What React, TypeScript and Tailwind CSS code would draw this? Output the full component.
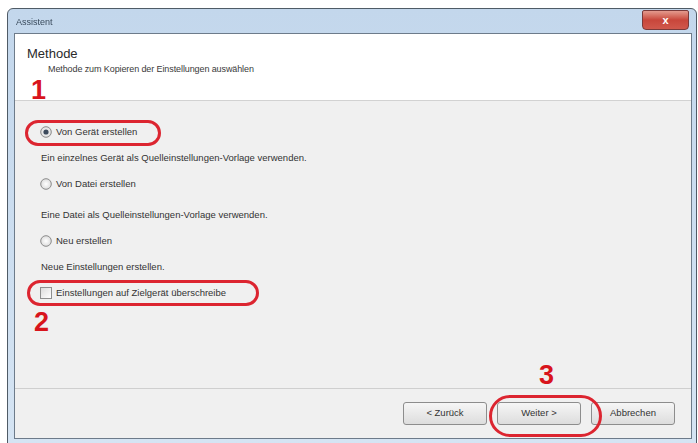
import React from 'react';

const font = { fontFamily: '"Liberation Sans", Arial, sans-serif' };

function Radio({ checked }: { checked?: boolean }) {
  return (
    <svg width="12" height="12" viewBox="0 0 12 12" className="shrink-0">
      <defs>
        <radialGradient id="rg" cx="50%" cy="50%" r="60%">
          <stop offset="0%" stopColor="#ffffff" />
          <stop offset="100%" stopColor="#d6d6d6" />
        </radialGradient>
      </defs>
      <circle cx="6" cy="6" r="5.3" fill="url(#rg)" stroke="#8c8c8c" strokeWidth="1" />
      {checked && <circle cx="6" cy="6" r="2.6" fill="#3c4a5c" />}
    </svg>
  );
}

function Checkbox() {
  return (
    <span className="shrink-0 w-[12px] h-[12px] border border-[#8e8f8f] bg-gradient-to-br from-[#dcdcdc] to-[#ffffff]" />
  );
}

const options = [
  { label: 'Von Gerät erstellen', desc: 'Ein einzelnes Gerät als Quelleinstellungen-Vorlage verwenden.', checked: true },
  { label: 'Von Datei erstellen', desc: 'Eine Datei  als Quelleinstellungen-Vorlage verwenden.', checked: false },
  { label: 'Neu erstellen', desc: 'Neue Einstellungen erstellen.', checked: false },
];

export default function App() {
  return (
    <div className="relative w-[698px] h-[443px] bg-white overflow-hidden" style={font}>
      <div className="ml-[7px] mt-[8px] w-[690px] h-[436px] border border-[#4f5b66] rounded-t-[6px] bg-gradient-to-b from-[#c3d7ec] to-[#d5e4f3] flex flex-col">
        {/* title bar */}
        <div className="h-[24px] flex items-start justify-between pl-[8px] pr-[7px]">
          <span className="mt-[7px] text-[9px] text-[#3a4b5c] blur-[0.7px]">Assistent</span>
          <div className="mt-[1px] w-[47px] h-[20px] rounded-b-[4px] rounded-t-[2px] border border-[#7a3a3a] bg-gradient-to-b from-[#e39a8e] via-[#c8463b] to-[#d0584c] flex items-center justify-center text-white text-[11px] font-bold">
            x
          </div>
        </div>

        {/* client */}
        <div className="ml-[6px] mr-[4px] mb-[4px] flex-1 border border-[#6d7b8a] bg-[#f0f0f0] flex flex-col">
          <div className="h-[67px] bg-white border-b border-[#d2d2d2] pl-[12px] pt-[12px]">
            <div className="text-[13px] leading-[16px] text-[#2a2a2a]">Methode</div>
            <div className="pl-[21px] mt-[1px] text-[9px] leading-[12px] text-[#3a3a3a] tracking-[-0.1px]">
              Methode zum Kopieren der Einstellungen auswählen
            </div>
          </div>

          <div className="flex-1 pl-[25px] pt-[18px] text-[9.5px] text-[#333]">
            {options.map((o, i) => (
              <div key={o.label}>
                <div className="h-[26px] flex items-center gap-[4px]">
                  <Radio checked={o.checked} />
                  <span>{o.label}</span>
                </div>
                <div className={`h-[26px] flex items-center pl-[1px] ${i === 1 ? 'mt-[5px]' : ''}`}>{o.desc}</div>
              </div>
            ))}
            <div className="h-[26px] flex items-center gap-[4px]">
              <Checkbox />
              <span>Einstellungen auf Zielgerät überschreibe</span>
            </div>
          </div>

          <div className="h-[50px] border-t border-[#cfcfcf] flex items-center justify-end gap-[10px] pr-[16px] pb-[1px]">
            {['< Zurück', 'Weiter >', 'Abbrechen'].map((b) => (
              <div
                key={b}
                className="w-[84px] h-[23px] rounded-[3px] border border-[#8d8d8d] bg-gradient-to-b from-[#f6f6f6] to-[#dddddd] flex items-center justify-center text-[9.5px] text-[#333]"
              >
                {b}
              </div>
            ))}
          </div>
        </div>
      </div>

      {/* annotations */}
      <span className="absolute left-[31px] top-[76px] text-[27px] leading-[28px] font-bold text-[#d8141c]">1</span>
      <span className="absolute left-[34px] top-[308px] text-[27px] leading-[28px] font-bold text-[#d8141c]">2</span>
      <span className="absolute left-[539px] top-[361px] text-[27px] leading-[28px] font-bold text-[#d8141c]">3</span>

      <div className="absolute left-[25px] top-[120px] w-[136px] h-[26px] rounded-full border-[3px] border-[#dc2530]" />
      <div className="absolute left-[27px] top-[280px] w-[232px] h-[26px] rounded-full border-[3px] border-[#dc2530]" />
      <div className="absolute left-[489px] top-[395px] w-[113px] h-[42px] rounded-full border-[3px] border-[#dc2530]" />
    </div>
  );
}
